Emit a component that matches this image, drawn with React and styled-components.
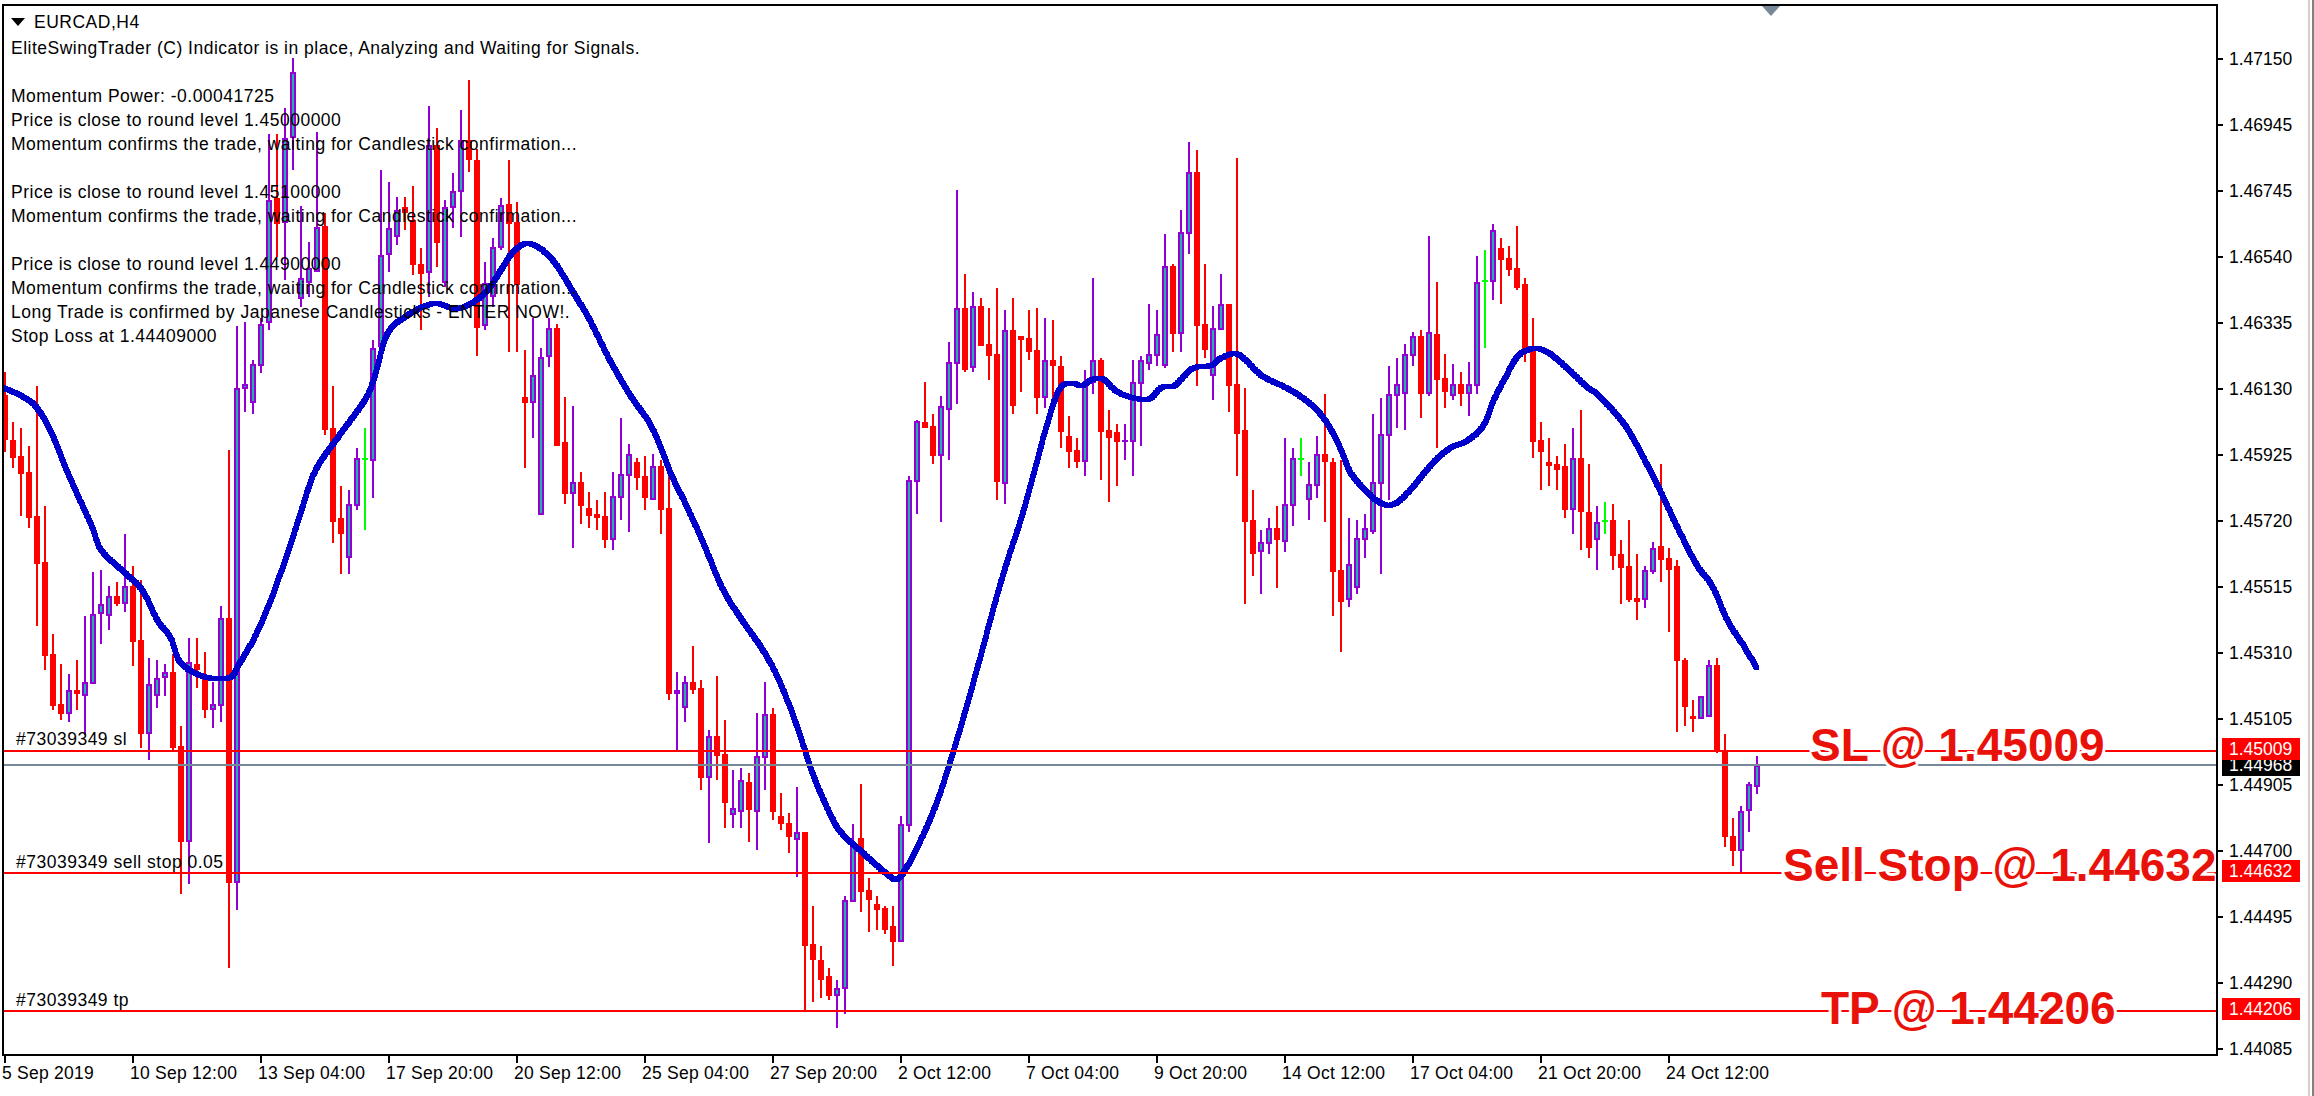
import React from 'react';
import styled, { createGlobalStyle } from 'styled-components';

const GlobalStyle = createGlobalStyle`
  html, body {
    margin: 0;
    padding: 0;
    background: #fff;
  }
`;

// type, body top, body bottom, wick top, wick bottom (page px). One bar every 8px from x=4.6
const BARS = [
  ['r',395,440,372,452],['r',440,458,422,468],['r',456,474,428,516],['r',472,518,446,528],['r',516,564,386,626],
  ['r',562,656,506,670],['r',654,706,634,710],['r',704,714,664,720],['b',690,714,674,722],['r',690,694,660,710],
  ['b',682,696,616,735],['b',614,684,572,684],['b',604,614,570,644],['b',596,616,586,630],['r',596,604,582,606],
  ['b',586,604,534,612],['r',586,642,566,666],['r',640,734,580,748],['b',684,734,658,760],['b',678,696,660,708],
  ['b',672,678,664,696],['r',672,748,654,750],['r',746,842,726,894],['b',662,842,638,884],['r',664,670,638,688],
  ['r',676,710,652,718],['b',704,710,682,728],['b',618,706,606,722],['r',618,883,450,968],['b',388,883,326,910],
  ['b',384,389,322,412],['b',364,403,360,414],['b',324,366,318,373],['b',200,323,134,330],['r',198,224,134,257],
  ['b',138,223,108,280],['b',72,138,58,170],['b',278,299,206,307],['b',268,283,242,297],['b',227,272,132,272],
  ['r',226,430,213,435],['r',428,522,386,543],['r',518,534,486,574],['b',504,558,490,574],['b',458,506,448,510],
  ['g',459,459,428,530],['b',348,461,340,498],['b',255,347,170,353],['b',228,255,182,272],['b',210,237,197,245],
  ['r',207,213,197,230],['r',220,265,186,275],['r',264,274,248,330],['b',145,273,106,297],['r',145,243,128,267],
  ['b',207,283,200,287],['b',191,208,173,228],['b',140,192,110,237],['r',140,160,80,172],['r',160,328,149,356],
  ['b',283,326,262,330],['b',247,297,238,307],['b',205,248,198,250],['r',204,224,160,352],['r',222,285,202,352],
  ['r',397,403,350,468],['b',375,403,318,438],['b',357,515,348,515],['b',328,357,318,367],['r',328,446,324,446],
  ['r',442,494,397,504],['b',482,494,406,548],['r',482,506,472,524],['r',508,516,492,528],['r',514,518,500,530],
  ['r',516,540,492,548],['b',496,540,472,550],['b',474,498,418,520],['b',454,476,444,532],['r',462,478,458,490],
  ['r',476,498,456,510],['b',466,500,454,500],['r',466,510,460,534],['r',508,694,470,700],['b',690,694,672,750],
  ['b',682,708,676,722],['r',682,690,646,694],['r',688,778,680,790],['b',736,778,730,843],['r',736,756,676,780],
  ['r',754,803,720,828],['b',808,815,770,828],['b',780,812,768,828],['r',782,810,773,842],['b',756,812,713,850],
  ['b',714,758,682,790],['r',714,812,708,820],['r',816,824,793,830],['r',823,837,813,853],['b',832,840,787,877],
  ['r',832,946,832,1010],['r',944,960,906,1002],['r',960,980,946,998],['r',976,996,968,1000],['b',988,996,980,1028],
  ['b',900,989,896,1014],['b',843,902,824,902],['r',838,892,784,912],['r',890,900,878,932],['r',904,910,896,930],
  ['r',908,930,906,934],['r',926,942,906,966],['b',824,942,816,942],['b',480,826,476,832],['b',421,482,420,514],
  ['r',422,428,382,428],['r',426,456,414,464],['b',406,456,396,522],['b',362,410,342,460],['b',308,364,190,404],
  ['r',308,370,274,372],['b',306,368,292,372],['r',306,346,298,346],['r',344,356,308,380],['r',354,482,288,500],
  ['b',330,484,310,504],['r',330,406,298,414],['r',336,340,336,392],['r',338,352,310,360],['r',350,398,308,414],
  ['b',360,398,318,408],['r',360,366,320,398],['r',366,432,356,448],['r',436,452,416,468],['r',450,462,438,468],
  ['b',384,462,370,476],['b',360,383,278,394],['r',360,432,358,480],['r',430,438,410,502],['r',432,442,424,486],
  ['b',440,442,424,460],['b',382,442,360,476],['b',360,384,356,446],['b',354,364,304,370],['b',334,356,310,366],
  ['b',266,366,234,368],['r',266,334,264,352],['b',232,334,210,352],['b',172,234,142,254],['r',172,326,150,386],
  ['r',324,350,264,358],['b',328,376,306,400],['b',304,330,274,330],['r',304,386,304,412],['r',384,434,158,476],
  ['r',430,522,388,604],['r',520,554,490,576],['b',542,552,530,594],['b',528,544,518,554],['r',528,540,506,588],
  ['b',504,542,438,552],['b',458,506,448,526],['g',459,459,438,476],['b',484,500,462,520],['b',454,486,436,498],
  ['r',454,462,394,522],['r',462,572,458,616],['r',570,602,460,652],['b',564,600,518,607],['b',538,588,520,594],
  ['b',528,540,514,558],['b',482,532,414,534],['b',434,484,398,574],['b',394,436,366,500],['b',384,396,358,428],
  ['b',354,394,344,430],['b',336,356,332,366],['r',336,394,330,418],['b',332,394,236,396],['r',334,380,282,448],
  ['r',378,392,354,408],['b',384,396,364,400],['r',384,394,372,406],['b',384,394,362,416],['b',282,386,256,394],
  ['g',281,281,250,348],['b',230,282,224,300],['r',248,260,238,304],['r',258,270,246,276],['r',268,288,226,290],
  ['r',284,350,278,362],['r',348,442,318,458],['r',440,452,422,490],['r',462,466,438,486],['r',464,470,456,490],
  ['r',466,510,444,518],['b',458,510,428,534],['r',458,512,410,550],['r',512,548,464,558],['b',522,540,506,570],
  ['g',521,521,502,534],['r',520,556,504,570],['r',554,568,540,604],['r',566,600,520,602],['r',598,602,554,620],
  ['b',570,600,566,608],['b',548,572,542,574],['r',546,560,464,582],['r',558,570,548,632],['r',566,661,560,732],
  ['r',660,707,658,726],['r',716,719,700,732],['b',696,719,696,719],['b',665,717,660,717],['r',665,752,658,753],
  ['r',751,837,734,847],['r',836,851,818,866],['b',811,851,806,872],['b',784,811,782,832],['b',765,787,756,794],
];

// blue moving average, page px
const MA = [
  [3,387],[25,397],[38,408],[51,430],[66,467],[77,492],[92,525],[102,550],[125,572],[143,590],[158,620],[171,637],
  [181,662],[204,676],[230,677],[240,663],[255,637],[270,603],[288,553],[301,513],[316,470],[342,432],[365,400],
  [375,377],[388,333],[408,315],[434,303],[459,308],[485,293],[503,267],[515,250],[530,243],[551,257],[571,287],
  [592,323],[612,363],[633,398],[653,428],[673,477],[686,503],[704,543],[724,590],[745,623],[765,652],[781,683],
  [798,727],[811,767],[823,797],[840,830],[863,852],[886,872],[900,877],[921,840],[938,800],[952,757],[966,710],
  [978,667],[997,597],[1009,557],[1022,517],[1035,470],[1045,433],[1055,400],[1063,385],[1073,383],[1083,385],
  [1093,379],[1104,379],[1119,392],[1142,399],[1152,397],[1162,387],[1175,385],[1193,368],[1211,365],[1223,357],
  [1239,354],[1262,375],[1280,384],[1295,392],[1315,407],[1331,428],[1343,453],[1351,472],[1366,490],[1382,503],
  [1396,503],[1412,488],[1433,463],[1450,448],[1468,440],[1484,425],[1494,400],[1507,375],[1519,355],[1535,348],
  [1550,353],[1570,370],[1588,387],[1599,395],[1625,424],[1645,459],[1661,491],[1679,529],[1697,564],[1713,586],
  [1728,620],[1744,645],[1757,667],
];

const LEVELS = [
  { y: 750, color: '#ff0000' },
  { y: 764, color: '#778899' },
  { y: 872, color: '#ff0000' },
  { y: 1010, color: '#ff0000' },
];

const PRICES = [
  '1.47150', '1.46945', '1.46745', '1.46540', '1.46335', '1.46130', '1.45925', '1.45720',
  '1.45515', '1.45310', '1.45105', '1.44905', '1.44700', '1.44495', '1.44290', '1.44085',
];

const DATES = [
  '5 Sep 2019', '10 Sep 12:00', '13 Sep 04:00', '17 Sep 20:00', '20 Sep 12:00', '25 Sep 04:00', '27 Sep 20:00',
  '2 Oct 12:00', '7 Oct 04:00', '9 Oct 20:00', '14 Oct 12:00', '17 Oct 04:00', '21 Oct 20:00', '24 Oct 12:00',
];

const COMMENT = [
  { text: 'EliteSwingTrader (C) Indicator is in place, Analyzing and Waiting for Signals.', gap: true },
  { text: 'Momentum Power: -0.00041725' },
  { text: 'Price is close to round level 1.45000000' },
  { text: 'Momentum confirms the trade, waiting for Candlestick confirmation...', gap: true },
  { text: 'Price is close to round level 1.45100000' },
  { text: 'Momentum confirms the trade, waiting for Candlestick confirmation...', gap: true },
  { text: 'Price is close to round level 1.44900000' },
  { text: 'Momentum confirms the trade, waiting for Candlestick confirmation...' },
  { text: 'Long Trade is confirmed by Japanese Candlesticks - ENTER NOW!.' },
  { text: 'Stop Loss at 1.44409000' },
];

// smooth the line with catmull-rom, then stamp a small square per pixel like the terminal's pen
const maPath = () => {
  const seen = new Set();
  let d = '';
  for (let i = 0; i < MA.length - 1; i++) {
    const p0 = MA[Math.max(i - 1, 0)];
    const p1 = MA[i];
    const p2 = MA[i + 1];
    const p3 = MA[Math.min(i + 2, MA.length - 1)];
    const steps = Math.ceil(Math.hypot(p2[0] - p1[0], p2[1] - p1[1]));
    for (let s = 0; s <= steps; s++) {
      const t = s / steps;
      const t2 = t * t;
      const t3 = t2 * t;
      const at = (k) =>
        0.5 * (2 * p1[k] + (p2[k] - p0[k]) * t + (2 * p0[k] - 5 * p1[k] + 4 * p2[k] - p3[k]) * t2 +
          (3 * p1[k] - p0[k] - 3 * p2[k] + p3[k]) * t3);
      const x = Math.round(at(0));
      const y = Math.round(at(1));
      const key = x + ',' + y;
      if (seen.has(key)) continue;
      seen.add(key);
      d += `M${x - 3} ${y - 2}h5v5h-5z`;
    }
  }
  return d;
};

const Page = styled.div`
  display: flex;
  width: 2314px;
  height: 1096px;
  overflow: hidden;
  background: #fff;
  font-family: "Liberation Sans", Arial, sans-serif;
  font-size: 17.5px;
  color: #000;
`;

const Terminal = styled.div`
  display: grid;
  grid-template-columns: 2216px 90px;
  grid-template-rows: 1052px 40px;
  margin: 4px 0 0 2px;
`;

const Edge = styled.div`
  width: 2px;
  height: 1096px;
  border-left: 2px solid #d4d0c8;
  border-right: 2px solid #808080;
  flex-shrink: 0;
`;

const Plot = styled.div`
  position: relative;
  box-sizing: border-box;
  border: 2px solid #000;
  overflow: hidden;
`;

const ChartSvg = styled.svg`
  display: block;
`;

const Comment = styled.div`
  position: absolute;
  left: 7px;
  top: 4px;
  white-space: nowrap;
  letter-spacing: 0.5px;
`;

const SymbolRow = styled.div`
  display: flex;
  align-items: center;
  gap: 9px;
  height: 24px;
  margin-bottom: 2px;
`;

const Caret = styled.span`
  width: 0;
  height: 0;
  border-left: 7px solid transparent;
  border-right: 7px solid transparent;
  border-top: 8px solid #000;
`;

const CommentLine = styled.div`
  height: 24px;
  line-height: 24px;
  margin-bottom: ${(p) => (p.$gap ? '24px' : '0')};
`;

const ShiftMark = styled.span`
  position: absolute;
  left: 1758px;
  top: 0;
  width: 0;
  height: 0;
  border-left: 9px solid transparent;
  border-right: 9px solid transparent;
  border-top: 10px solid #778899;
`;

const OrderTag = styled.span`
  position: absolute;
  left: 12px;
  top: ${(p) => p.$top}px;
  line-height: 20px;
  white-space: nowrap;
  letter-spacing: 0.5px;
`;

const BigLabel = styled.span`
  position: absolute;
  left: ${(p) => p.$left}px;
  top: ${(p) => p.$top}px;
  font-size: 46px;
  font-weight: 700;
  line-height: 52px;
  white-space: nowrap;
  color: #e9120a;
  text-shadow:
    3px 0 0 #fff, -3px 0 0 #fff, 0 3px 0 #fff, 0 -3px 0 #fff,
    2px 2px 0 #fff, -2px 2px 0 #fff, 2px -2px 0 #fff, -2px -2px 0 #fff;
`;

const PriceAxis = styled.div`
  position: relative;
  display: flex;
  flex-direction: column;
  padding-top: 22px;
`;

const PriceRow = styled.div`
  display: flex;
  align-items: center;
  height: 66px;
  flex-shrink: 0;
`;

const PriceTick = styled.span`
  width: 5px;
  height: 2px;
  margin-right: 6px;
  background: #000;
`;

const PriceTag = styled.span`
  position: absolute;
  left: 4px;
  top: ${(p) => p.$top}px;
  box-sizing: border-box;
  width: 78px;
  height: ${(p) => p.$height}px;
  padding-left: 7px;
  line-height: ${(p) => p.$height}px;
  color: #fff;
  background: ${(p) => p.$bg};
`;

const TimeAxis = styled.div`
  display: flex;
  padding-left: 2px;
`;

const TimeCell = styled.div`
  display: flex;
  flex-direction: column;
  width: 128px;
  flex-shrink: 0;
`;

const TimeTick = styled.span`
  width: 2px;
  height: 7px;
  background: #000;
`;

const TimeLabel = styled.span`
  margin-left: -2px;
  line-height: 20px;
  white-space: nowrap;
  letter-spacing: 0.25px;
`;

const Bar = ({ bar, index }) => {
  const [type, top, bottom, high, low] = bar;
  const x = Math.round(4.6 + 8 * index);
  if (type === 'g') {
    return (
      <g fill="#00ff00">
        <rect x={x - 1} y={high} width={2} height={low - high} />
        <rect x={x - 3} y={top - 1} width={6} height={2} />
      </g>
    );
  }
  if (type === 'r') {
    return (
      <g fill="#ff0000">
        <rect x={x - 1} y={high} width={2} height={low - high} />
        <rect x={x - 3} y={top} width={6} height={Math.max(bottom - top, 2)} />
      </g>
    );
  }
  return (
    <g>
      <rect x={x - 1} y={high} width={2} height={low - high} fill="#9400d3" />
      <rect x={x - 3} y={top} width={6} height={bottom - top} fill="#9400d3" />
      <rect x={x - 1} y={top + 2} width={2} height={Math.max(bottom - top - 4, 0)} fill="#20b2aa" />
    </g>
  );
};

const Chart = () => (
  <ChartSvg width="2212" height="1048" viewBox="4 6 2212 1048" shapeRendering="crispEdges">
    {BARS.map((bar, i) => (
      <Bar key={i} bar={bar} index={i} />
    ))}
    <path d={maPath()} fill="#0000cd" />
    {LEVELS.map((l) => (
      <rect key={l.y} x="4" y={l.y} width="2212" height="2" fill={l.color} />
    ))}
  </ChartSvg>
);

export default function App() {
  return (
    <Page>
      <GlobalStyle />
      <Terminal>
        <Plot>
          <Chart />
          <ShiftMark />
          <Comment>
            <SymbolRow>
              <Caret />
              EURCAD,H4
            </SymbolRow>
            {COMMENT.map((line, i) => (
              <CommentLine key={i} $gap={line.gap}>
                {line.text}
              </CommentLine>
            ))}
          </Comment>
          <OrderTag $top={723}>#73039349 sl</OrderTag>
          <OrderTag $top={846}>#73039349 sell stop 0.05</OrderTag>
          <OrderTag $top={984}>#73039349 tp</OrderTag>
          <BigLabel $left={1806} $top={713}>SL @ 1.45009</BigLabel>
          <BigLabel $left={1779} $top={833}>Sell Stop @ 1.44632</BigLabel>
          <BigLabel $left={1817} $top={976}>TP @ 1.44206</BigLabel>
        </Plot>
        <PriceAxis>
          {PRICES.map((p) => (
            <PriceRow key={p}>
              <PriceTick />
              {p}
            </PriceRow>
          ))}
          <PriceTag $top={750} $height={22} $bg="#000">1.44968</PriceTag>
          <PriceTag $top={734} $height={22} $bg="#ff0000">1.45009</PriceTag>
          <PriceTag $top={856} $height={22} $bg="#ff0000">1.44632</PriceTag>
          <PriceTag $top={994} $height={22} $bg="#ff0000">1.44206</PriceTag>
        </PriceAxis>
        <TimeAxis>
          {DATES.map((d) => (
            <TimeCell key={d}>
              <TimeTick />
              <TimeLabel>{d}</TimeLabel>
            </TimeCell>
          ))}
        </TimeAxis>
      </Terminal>
      <Edge />
    </Page>
  );
}
